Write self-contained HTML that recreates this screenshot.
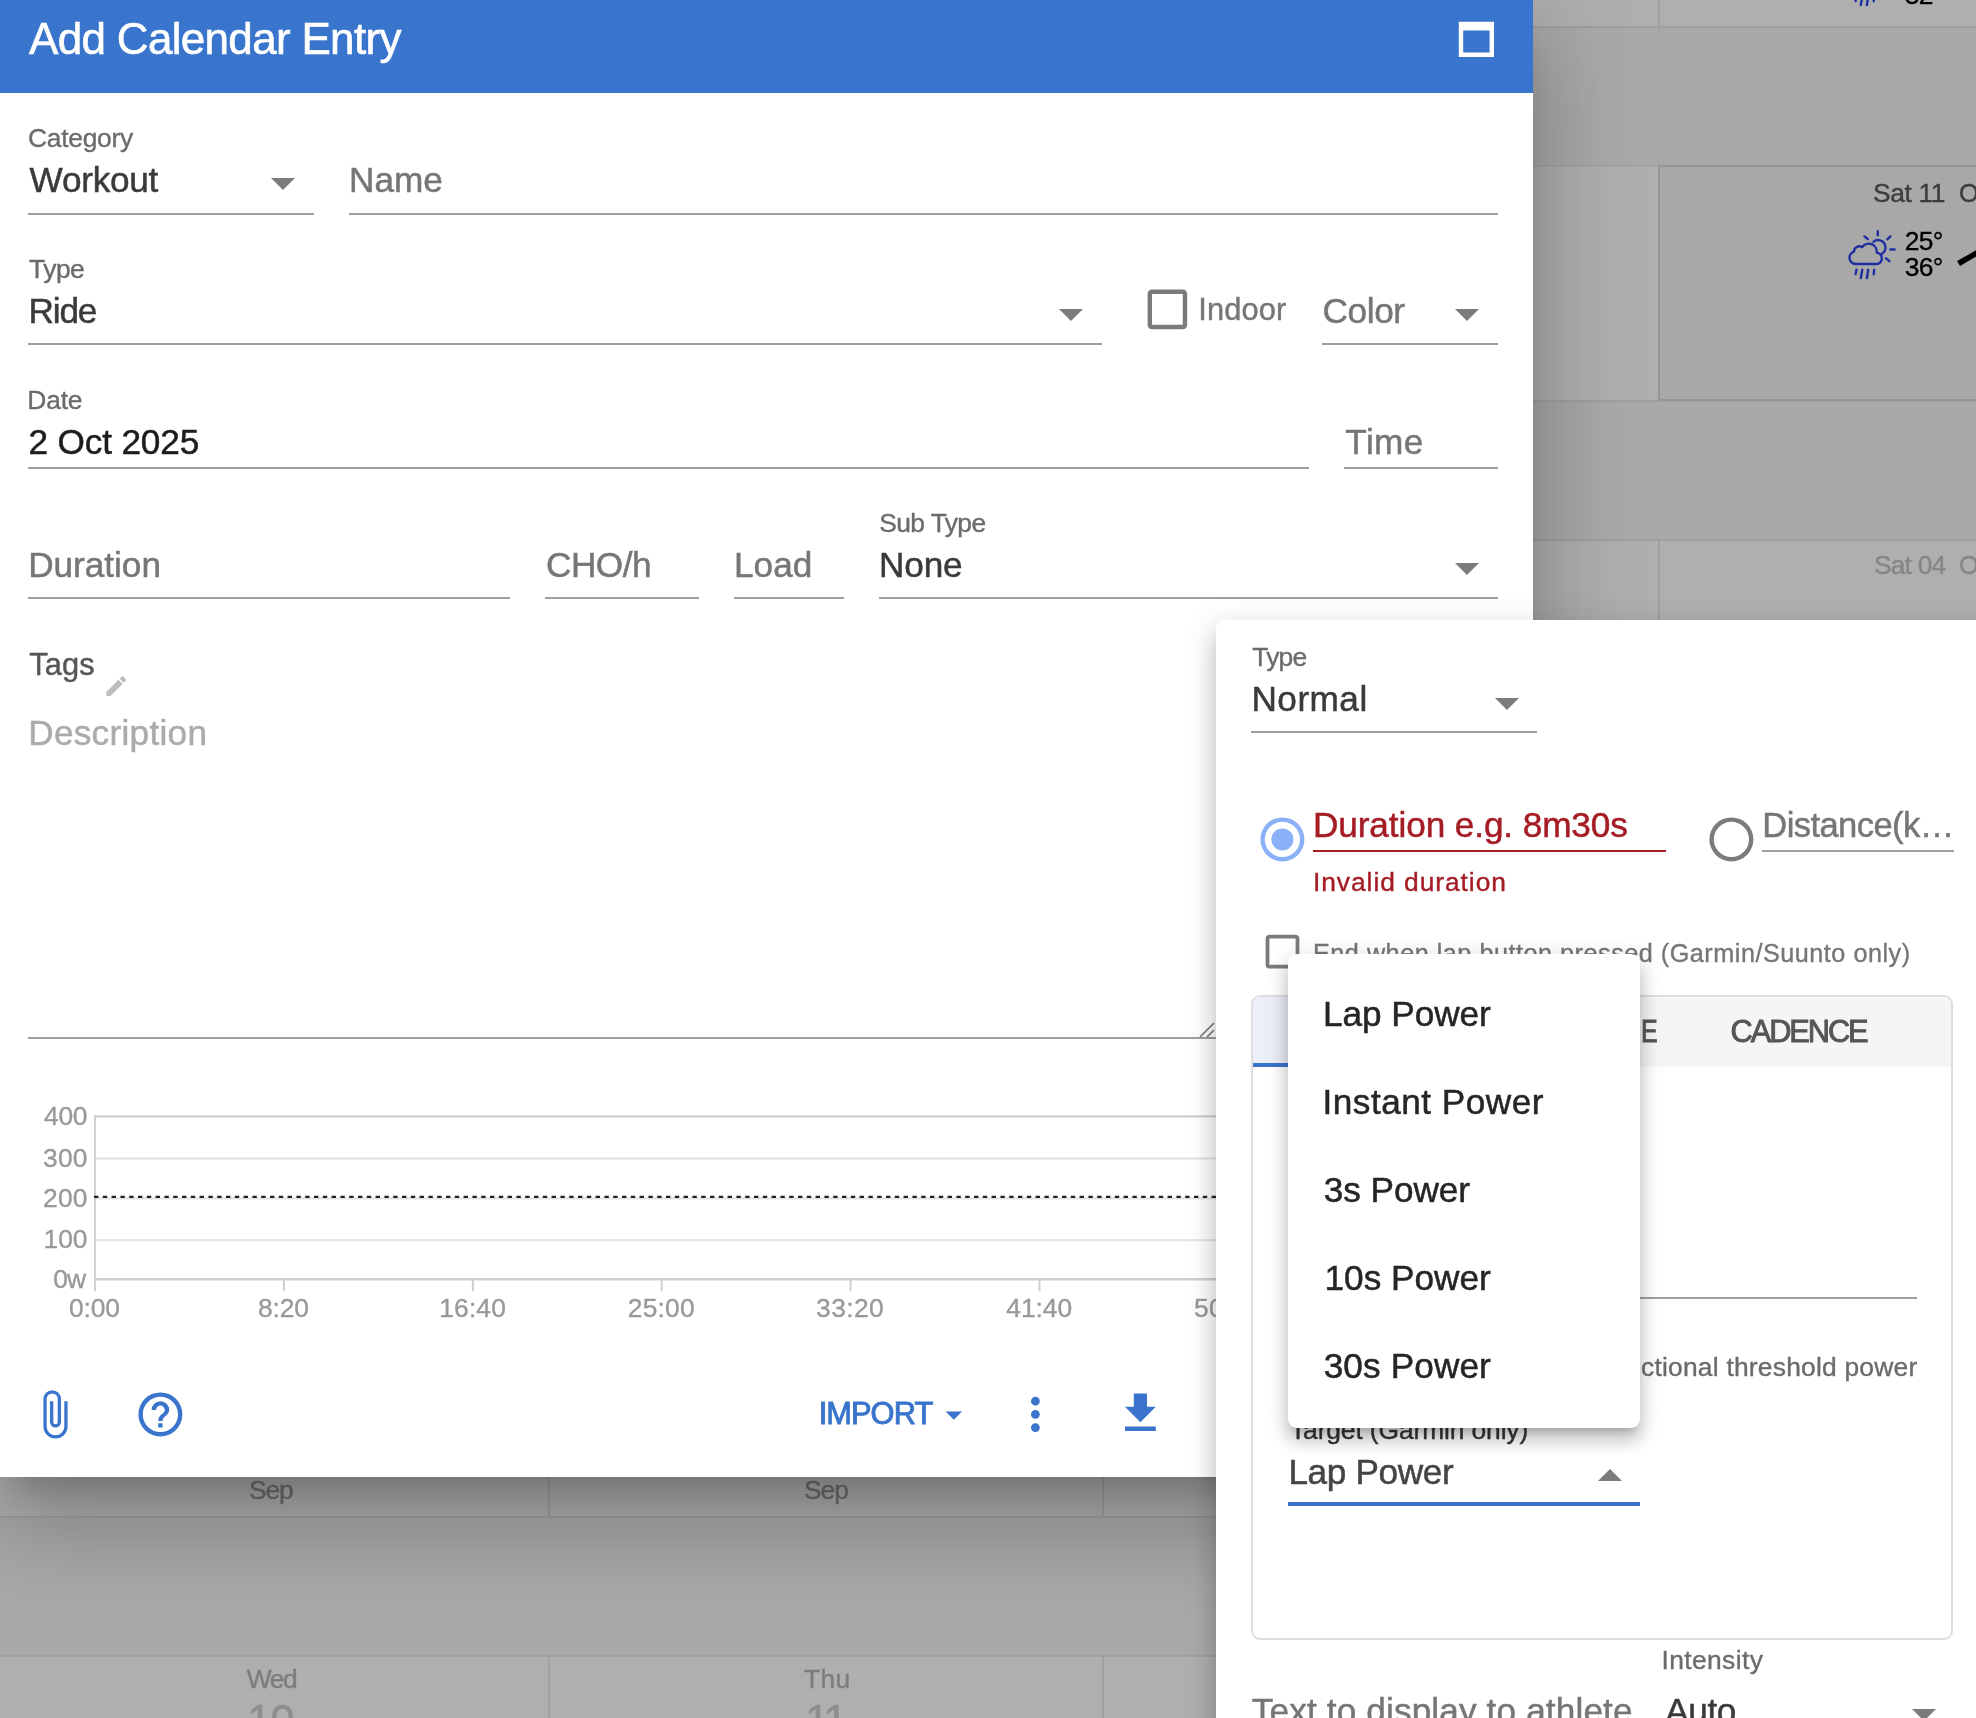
<!DOCTYPE html>
<html><head><meta charset="utf-8"><title>Add Calendar Entry</title>
<style>
html,body{margin:0;padding:0}
body{width:1976px;height:1718px;overflow:hidden;position:relative;background:#a9a9a9;font-family:"Liberation Sans",sans-serif}
.t{position:absolute;white-space:pre;line-height:1;-webkit-text-stroke:0.014em currentColor}
#bg,#dlg,#pan,#menu{position:absolute;left:0;top:0;width:1976px;height:1718px;will-change:transform}
.a{position:absolute}
.ic{position:absolute;width:52.8px;height:52.8px}
.ul{position:absolute;height:2px;background:#9f9f9f}
.ad{position:absolute;width:0;height:0;border-left:12.6px solid transparent;border-right:12.6px solid transparent;border-top:12.8px solid #7b7b7b}
.au{position:absolute;width:0;height:0;border-left:12.6px solid transparent;border-right:12.6px solid transparent;border-bottom:12.8px solid #7b7b7b}
.lt{background:#afafaf}
.ln{background:#a0a0a0}
</style></head><body>
<!-- ============ background calendar (dimmed) ============ -->
<div id="bg">
<div class="a lt" style="left:1533px;top:0;width:443px;height:26px"></div>
<div class="a lt" style="left:1533px;top:166px;width:126px;height:234px"></div>
<div class="a lt" style="left:1533px;top:540px;width:443px;height:90px"></div>
<div class="a lt" style="left:0;top:1470px;width:1230px;height:47px"></div>
<div class="a lt" style="left:0;top:1656px;width:1230px;height:70px"></div>
<div class="a ln" style="left:1533px;top:25.5px;width:443px;height:2px"></div>
<div class="a ln" style="left:1533px;top:164.5px;width:443px;height:2px;opacity:.55"></div>
<div class="a ln" style="left:1533px;top:400px;width:443px;height:2px"></div>
<div class="a ln" style="left:1533px;top:538.5px;width:443px;height:2px"></div>
<div class="a ln" style="left:1657.5px;top:0;width:2px;height:26px"></div>
<div class="a ln" style="left:1657.5px;top:27px;width:2px;height:600px;opacity:.2"></div>
<div class="a ln" style="left:1657.5px;top:540px;width:2px;height:90px"></div>
<div class="a" style="left:1657.5px;top:164.5px;width:340px;height:232px;border:2px solid #959595;background:#a8a8a8"></div>
<div class="a ln" style="left:0;top:1516px;width:1230px;height:2px"></div>
<div class="a ln" style="left:0;top:1654.5px;width:1230px;height:2px"></div>
<div class="a ln" style="left:547.7px;top:1470px;width:2px;height:47px"></div>
<div class="a ln" style="left:1102.3px;top:1470px;width:2px;height:47px"></div>
<div class="a ln" style="left:547.7px;top:1656px;width:2px;height:70px"></div>
<div class="a ln" style="left:1102.3px;top:1656px;width:2px;height:70px"></div>
<!-- weather icon -->
<svg class="a" style="left:1840px;top:225px" width="60" height="60" viewBox="1840 225 60 60"><g fill="none" stroke="#1f2fa3" stroke-width="2.4" stroke-linecap="round" stroke-linejoin="round">
<path d="M1855.5 264 a6.3 6.3 0 0 1 -1.6 -12.3 a5.5 5.5 0 0 1 8.3 -4.6 a8 8 0 0 1 14.5 5.5 a5.8 5.8 0 0 1 0.6 11.4 z"/>
<path d="M1873.4 241.8 A7.4 7.4 0 1 1 1882.3 253.6"/>
<path d="M1877.8 231.2V235.3M1864.5 236.4L1867.7 239M1890.4 236.4L1887.3 239.3M1890.4 249.5H1894.6M1886 258.4L1889.3 261.2"/>
<path d="M1856.5 269.6L1855.6 274M1862.3 269.6L1860.8 278M1868.2 269.6L1866.9 278M1874.2 269.6L1873.7 274.2"/>
</g></svg>
<svg class="a" style="left:1840px;top:0" width="60" height="12" viewBox="1840 273 60 12"><g fill="none" stroke="#1f2fa3" stroke-width="2.4" stroke-linecap="round" stroke-linejoin="round">
<path d="M1855.5 264 a6.3 6.3 0 0 1 -1.6 -12.3 a5.5 5.5 0 0 1 8.3 -4.6 a8 8 0 0 1 14.5 5.5 a5.8 5.8 0 0 1 0.6 11.4 z"/>
<path d="M1873.4 241.8 A7.4 7.4 0 1 1 1882.3 253.6"/>
<path d="M1877.8 231.2V235.3M1864.5 236.4L1867.7 239M1890.4 236.4L1887.3 239.3M1890.4 249.5H1894.6M1886 258.4L1889.3 261.2"/>
<path d="M1856.5 269.6L1855.6 274M1862.3 269.6L1860.8 278M1868.2 269.6L1866.9 278M1874.2 269.6L1873.7 274.2"/>
</g></svg>
<svg class="a" style="left:1950px;top:240px" width="30" height="30" viewBox="1950 240 30 30"><path d="M1957.2 261 L1976.5 250 L1976.5 256.2 L1960 266z" fill="#000"/></svg>
<span class="t" style="left:1872.9px;top:179.5px;font-size:26.4px;color:#3c3c3c;letter-spacing:-0.36px;">Sat 11</span>
<span class="t" style="left:1958.6px;top:179.5px;font-size:26.4px;color:#3c3c3c;transform-origin:0 0;transform:scaleX(0.968);">O</span>
<span class="t" style="left:1904.8px;top:227.7px;font-size:26.4px;color:#000;letter-spacing:-0.75px;">25°</span>
<span class="t" style="left:1904.8px;top:254.4px;font-size:26.4px;color:#000;letter-spacing:-0.75px;">36°</span>
<span class="t" style="left:1904.8px;top:-17.8px;font-size:26.4px;color:#000;letter-spacing:-0.75px;">32°</span>
<span class="t" style="left:1873.9px;top:552.4px;font-size:26.4px;color:#868686;letter-spacing:-0.78px;">Sat 04</span>
<span class="t" style="left:1958.6px;top:552.4px;font-size:26.4px;color:#868686;transform-origin:0 0;transform:scaleX(0.968);">O</span>
<span class="t" style="left:249.0px;top:1477.1px;font-size:26.4px;color:#707070;letter-spacing:-1.10px;">Sep</span>
<span class="t" style="left:804.0px;top:1477.1px;font-size:26.4px;color:#707070;letter-spacing:-1.00px;">Sep</span>
<span class="t" style="left:246.7px;top:1666.2px;font-size:26.4px;color:#7d7d7d;letter-spacing:-1.35px;">Wed</span>
<span class="t" style="left:804.0px;top:1666.2px;font-size:26.4px;color:#7d7d7d;letter-spacing:0.35px;">Thu</span>
<span class="t" style="left:247.0px;top:1699.1px;font-size:44.0px;color:#8e8e8e;letter-spacing:-1.20px;">10</span>
<span class="t" style="left:805.0px;top:1699.1px;font-size:44.0px;color:#8e8e8e;letter-spacing:-3.00px;">11</span>
</div>
<!-- ============ main dialog ============ -->
<div id="dlg">
<div class="a" style="left:0;top:0;width:1533px;height:1477px;background:#fff;box-shadow:0 24px 33px -15px rgba(0,0,0,.2),0 53px 84px 7px rgba(0,0,0,.14),0 20px 101px 18px rgba(0,0,0,.12)"></div>
<div class="a" style="left:0;top:0;width:1533px;height:92.7px;background:#3974cd"></div>
<svg class="ic" style="left:1449.6px;top:12.9px" viewBox="0 0 24 24"><path fill="#fff" d="M4,4H20V20H4V4M6,8V18H18V8H6Z"/></svg>
<!-- underlines -->
<div class="ul" style="left:28px;top:213px;width:285.5px"></div>
<div class="ul" style="left:349px;top:213px;width:1148.5px"></div>
<div class="ul" style="left:28px;top:343px;width:1073.5px"></div>
<div class="ul" style="left:1322px;top:343px;width:175.5px"></div>
<div class="ul" style="left:28px;top:467px;width:1280.5px"></div>
<div class="ul" style="left:1344px;top:467px;width:153.5px"></div>
<div class="ul" style="left:28px;top:597px;width:481.5px"></div>
<div class="ul" style="left:545px;top:597px;width:153.5px"></div>
<div class="ul" style="left:734px;top:597px;width:109.5px"></div>
<div class="ul" style="left:879px;top:597px;width:618.5px"></div>
<div class="ul" style="left:28px;top:1036.5px;width:1190px"></div>
<!-- select arrows -->
<div class="ad" style="left:271.4px;top:177.9px"></div>
<div class="ad" style="left:1058.8px;top:308.9px"></div>
<div class="ad" style="left:1454.8px;top:308.9px"></div>
<div class="ad" style="left:1454.8px;top:563.1px"></div>
<!-- indoor checkbox -->
<svg class="ic" style="left:1141.4px;top:282.9px" viewBox="0 0 24 24"><path fill="#7b7b7b" d="M19,3H5C3.89,3 3,3.89 3,5V19A2,2 0 0,0 5,21H19A2,2 0 0,0 21,19V5C21,3.89 20.1,3 19,3M19,5V19H5V5H19Z"/></svg>
<!-- pencil -->
<svg class="a" style="left:103.4px;top:672.6px;width:26.4px;height:26.4px" viewBox="0 0 24 24"><path fill="#bdbdbd" d="M20.71,7.04C21.1,6.65 21.1,6 20.71,5.63L18.37,3.29C18,2.9 17.35,2.9 16.96,3.29L15.12,5.12L18.87,8.87M3,17.25V21H6.75L17.81,9.93L14.06,6.18L3,17.25Z"/></svg>
<!-- textarea resize handle -->
<svg class="a" style="left:1198px;top:1020px" width="20" height="18" viewBox="0 0 20 18" stroke="#777" stroke-width="1.6" fill="none"><path d="M2 17L16 3M9 17L16 10"/></svg>
<!-- chart -->
<svg class="a" style="left:0;top:1100px" width="1533" height="200" viewBox="0 1100 1533 200" fill="none">
<path d="M95 1116.4H1533M95 1279.2H1533" stroke="#cfcfcf" stroke-width="2.4"/>
<path d="M95 1158.5H1533M95 1198.4H1533M95 1240.3H1533" stroke="#e2e2e2" stroke-width="2"/>
<path d="M95 1115.2V1291.3M283.9 1279V1291.3M472.9 1279V1291.3M661.7 1279V1291.3M850.6 1279V1291.3M1039.5 1279V1291.3" stroke="#cfcfcf" stroke-width="2"/>
<path d="M94 1196.9H1533" stroke="#222" stroke-width="2.2" stroke-dasharray="4.4 4.4"/>
</svg>
<!-- footer icons -->
<svg class="ic" style="left:27.8px;top:1387.8px" viewBox="0 0 24 24"><path fill="#3a74cc" d="M16.5,6V17.5A4,4 0 0,1 12.5,21.5A4,4 0 0,1 8.5,17.5V5A2.5,2.5 0 0,1 11,2.5A2.5,2.5 0 0,1 13.5,5V15.5A1,1 0 0,1 12.5,16.5A1,1 0 0,1 11.5,15.5V6H10V15.5A2.5,2.5 0 0,0 12.5,18A2.5,2.5 0 0,0 15,15.5V5A4,4 0 0,0 11,1A4,4 0 0,0 7,5V17.5A5.5,5.5 0 0,0 12.5,23A5.5,5.5 0 0,0 18,17.5V6H16.5Z"/></svg>
<svg class="ic" style="left:133.6px;top:1387.6px" viewBox="0 0 24 24"><path fill="#3a74cc" d="M11,18H13V16H11V18M12,2A10,10 0 0,0 2,12A10,10 0 0,0 12,22A10,10 0 0,0 22,12A10,10 0 0,0 12,2M12,20C7.59,20 4,16.41 4,12C4,7.59 7.59,4 12,4C16.41,4 20,7.59 20,12C20,16.41 16.41,20 12,20M12,6A4,4 0 0,0 8,10H10A2,2 0 0,1 12,8A2,2 0 0,1 14,10C14,12 11,11.75 11,15H13C13,12.75 16,12.5 16,10A4,4 0 0,0 12,6Z"/></svg>
<svg class="a" style="left:933.9px;top:1394.5px;width:39.6px;height:39.6px" viewBox="0 0 24 24"><path fill="#3a74cc" d="M7,10L12,15L17,10H7Z"/></svg>
<svg class="ic" style="left:1008.6px;top:1387.8px" viewBox="0 0 24 24"><path fill="#3a74cc" d="M12,16A2,2 0 0,1 14,18A2,2 0 0,1 12,20A2,2 0 0,1 10,18A2,2 0 0,1 12,16M12,10A2,2 0 0,1 14,12A2,2 0 0,1 12,14A2,2 0 0,1 10,12A2,2 0 0,1 12,10M12,4A2,2 0 0,1 14,6A2,2 0 0,1 12,8A2,2 0 0,1 10,6A2,2 0 0,1 12,4Z"/></svg>
<svg class="ic" style="left:1114.3px;top:1387.4px" viewBox="0 0 24 24"><path fill="#3a74cc" d="M5,20H19V18H5M19,9H15V3H9V9H5L12,16L19,9Z"/></svg>
<span class="t" style="left:29.0px;top:16.6px;font-size:44.0px;color:#fff;letter-spacing:-0.68px;">Add Calendar Entry</span>
<span class="t" style="left:28.1px;top:124.6px;font-size:26.4px;color:#6b6b6b;letter-spacing:-0.29px;">Category</span>
<span class="t" style="left:29.6px;top:162.1px;font-size:35.2px;color:#3a3a3a;letter-spacing:-0.27px;">Workout</span>
<span class="t" style="left:349.0px;top:161.6px;font-size:35.2px;color:#767676;">Name</span>
<span class="t" style="left:29.1px;top:255.6px;font-size:26.4px;color:#6b6b6b;letter-spacing:-0.53px;">Type</span>
<span class="t" style="left:28.6px;top:293.1px;font-size:35.2px;color:#3a3a3a;letter-spacing:-1.20px;">Ride</span>
<span class="t" style="left:1198.2px;top:294.5px;font-size:30.8px;color:#767676;letter-spacing:0.16px;">Indoor</span>
<span class="t" style="left:1322.5px;top:292.7px;font-size:35.2px;color:#767676;letter-spacing:-0.38px;">Color</span>
<span class="t" style="left:27.3px;top:386.5px;font-size:26.4px;color:#6b6b6b;letter-spacing:-0.20px;">Date</span>
<span class="t" style="left:28.6px;top:423.9px;font-size:35.2px;color:#1c1c1c;letter-spacing:-0.17px;">2 Oct 2025</span>
<span class="t" style="left:1345.3px;top:423.6px;font-size:35.2px;color:#767676;letter-spacing:0.40px;">Time</span>
<span class="t" style="left:879.3px;top:509.6px;font-size:26.4px;color:#6b6b6b;letter-spacing:-0.61px;">Sub Type</span>
<span class="t" style="left:28.2px;top:546.9px;font-size:35.2px;color:#767676;letter-spacing:-0.03px;">Duration</span>
<span class="t" style="left:546.0px;top:546.8px;font-size:35.2px;color:#767676;letter-spacing:-0.50px;">CHO/h</span>
<span class="t" style="left:734.0px;top:546.8px;font-size:35.2px;color:#767676;">Load</span>
<span class="t" style="left:879.0px;top:546.8px;font-size:35.2px;color:#3a3a3a;letter-spacing:-0.17px;">None</span>
<span class="t" style="left:29.3px;top:649.7px;font-size:30.8px;color:#555;letter-spacing:0.07px;">Tags</span>
<span class="t" style="left:28.2px;top:715.0px;font-size:35.2px;color:#ababab;letter-spacing:0.28px;">Description</span>
<span class="t" style="left:44.0px;top:1102.9px;font-size:26.4px;color:#999999;letter-spacing:-0.30px;">400</span>
<span class="t" style="left:43.0px;top:1145.0px;font-size:26.4px;color:#999999;letter-spacing:0.20px;">300</span>
<span class="t" style="left:43.0px;top:1184.6px;font-size:26.4px;color:#999999;letter-spacing:0.20px;">200</span>
<span class="t" style="left:43.5px;top:1225.5px;font-size:26.4px;color:#999999;letter-spacing:-0.05px;">100</span>
<span class="t" style="left:53.3px;top:1265.5px;font-size:26.4px;color:#999999;letter-spacing:-0.90px;">0w</span>
<span class="t" style="left:68.9px;top:1295.1px;font-size:26.4px;color:#999999;letter-spacing:-0.10px;">0:00</span>
<span class="t" style="left:257.9px;top:1295.1px;font-size:26.4px;color:#999999;letter-spacing:-0.10px;">8:20</span>
<span class="t" style="left:439.3px;top:1295.1px;font-size:26.4px;color:#999999;letter-spacing:0.12px;">16:40</span>
<span class="t" style="left:627.8px;top:1295.1px;font-size:26.4px;color:#999999;letter-spacing:0.20px;">25:00</span>
<span class="t" style="left:816.1px;top:1295.1px;font-size:26.4px;color:#999999;letter-spacing:0.40px;">33:20</span>
<span class="t" style="left:1006.3px;top:1295.1px;font-size:26.4px;color:#999999;letter-spacing:-0.05px;">41:40</span>
<span class="t" style="left:1194.1px;top:1295.1px;font-size:26.4px;color:#999999;letter-spacing:0.23px;">50:00</span>
<span class="t" style="left:818.7px;top:1399.4px;font-size:30.8px;color:#3a74cc;letter-spacing:-0.94px;-webkit-text-stroke-width:0.03em;">IMPORT</span>
</div>
<!-- ============ step editor panel ============ -->
<div id="pan">
<div class="a" style="left:1216px;top:620px;width:800px;height:1200px;background:#fff;border-top-left-radius:9px;box-shadow:0 11px 11px -7px rgba(0,0,0,.2),0 18px 22px 2px rgba(0,0,0,.14),0 7px 31px 4px rgba(0,0,0,.12)"></div>
<div class="ul" style="left:1251px;top:731px;width:285.5px"></div>
<div class="ad" style="left:1495.3px;top:697.6px"></div>
<!-- radios -->
<svg class="ic" style="left:1255.6px;top:812.6px" viewBox="0 0 24 24"><path fill="#8ab0f8" d="M12,20A8,8 0 0,1 4,12A8,8 0 0,1 12,4A8,8 0 0,1 20,12A8,8 0 0,1 12,20M12,2A10,10 0 0,0 2,12A10,10 0 0,0 12,22A10,10 0 0,0 22,12A10,10 0 0,0 12,2M12,7A5,5 0 0,0 7,12A5,5 0 0,0 12,17A5,5 0 0,0 17,12A5,5 0 0,0 12,7Z"/></svg>
<svg class="ic" style="left:1705.2px;top:812.9px" viewBox="0 0 24 24"><path fill="#7b7b7b" d="M12,20A8,8 0 0,1 4,12A8,8 0 0,1 12,4A8,8 0 0,1 20,12A8,8 0 0,1 12,20M12,2A10,10 0 0,0 2,12A10,10 0 0,0 12,22A10,10 0 0,0 22,12A10,10 0 0,0 12,2Z"/></svg>
<div class="ul" style="left:1313px;top:849.8px;width:353px;background:#a51c25"></div>
<div class="ul" style="left:1762px;top:849.8px;width:191.7px"></div>
<!-- lap checkbox -->
<svg class="a" style="left:1259.5px;top:929.4px;width:45px;height:45px" viewBox="0 0 24 24"><path fill="#7b7b7b" d="M19,3H5C3.89,3 3,3.89 3,5V19A2,2 0 0,0 5,21H19A2,2 0 0,0 21,19V5C21,3.89 20.1,3 19,3M19,5V19H5V5H19Z"/></svg>
<!-- tabs card -->
<div class="a" style="left:1251px;top:995px;width:698.2px;height:640.5px;border:2px solid #dedede;border-radius:9px;overflow:hidden;background:#fff">
  <div class="a" style="left:0;top:0;width:700px;height:69.5px;background:#f5f5f5"></div>
  <div class="a" style="left:0;top:0;width:190px;height:69.5px;background:#eceef8"></div>
  <div class="a" style="left:0;top:65.6px;width:190px;height:4.4px;background:#3a74cc"></div>
</div>
<div class="ul" style="left:1289px;top:1297.4px;width:628px"></div>
<div class="a" style="left:1288px;top:1501.6px;width:352px;height:4.4px;background:#3a74cc"></div>
<div class="au" style="left:1597.7px;top:1469.0px"></div>
<div class="ad" style="left:1911.6px;top:1708.8px"></div>
<span class="t" style="left:1252.3px;top:644.3px;font-size:26.4px;color:#6b6b6b;letter-spacing:-0.77px;">Type</span>
<span class="t" style="left:1251.5px;top:681.4px;font-size:35.2px;color:#3a3a3a;letter-spacing:0.46px;">Normal</span>
<span class="t" style="left:1313.0px;top:806.8px;font-size:35.2px;color:#a51c25;letter-spacing:-0.11px;">Duration e.g. 8m30s</span>
<span class="t" style="left:1313.0px;top:868.6px;font-size:26.4px;color:#a51c25;letter-spacing:0.93px;">Invalid duration</span>
<span class="t" style="left:1762.3px;top:807.5px;font-size:34.6px;color:#767676;letter-spacing:-0.60px;">Distance(k…</span>
<span class="t" style="left:1313.0px;top:940.8px;font-size:25.2px;color:#767676;letter-spacing:0.52px;">End when lap button pressed (Garmin/Suunto only)</span>
<span class="t" style="left:1730.6px;top:1017.2px;font-size:30.8px;color:#555;letter-spacing:-2.10px;-webkit-text-stroke-width:0.03em;">CADENCE</span>
<span class="t" style="left:1640.6px;top:1017.1px;font-size:30.8px;color:#555;-webkit-text-stroke-width:0.03em;transform-origin:0 0;transform:scaleX(0.811);">E</span>
<span class="t" style="left:1641.0px;top:1353.6px;font-size:26.4px;color:#6b6b6b;letter-spacing:0.22px;">ctional threshold power</span>
<span class="t" style="left:1290.0px;top:1416.6px;font-size:26.4px;color:#333;letter-spacing:-0.12px;">Target (Garmin only)</span>
<span class="t" style="left:1288.4px;top:1453.6px;font-size:35.2px;color:#444;letter-spacing:-0.36px;">Lap Power</span>
<span class="t" style="left:1661.5px;top:1647.1px;font-size:26.4px;color:#6b6b6b;letter-spacing:0.38px;">Intensity</span>
<span class="t" style="left:1251.8px;top:1692.9px;font-size:35.2px;color:#767676;letter-spacing:0.13px;">Text to display to athlete</span>
<span class="t" style="left:1665.2px;top:1692.9px;font-size:35.2px;color:#3a3a3a;letter-spacing:-0.40px;">Auto</span>
</div>
<!-- ============ dropdown menu ============ -->
<div id="menu">
<div class="a" style="left:1288px;top:953.5px;width:352px;height:474px;background:#fff;border-radius:9px;box-shadow:0 8px 8px -5px rgba(0,0,0,.2),0 13px 16px 1.5px rgba(0,0,0,.14),0 5px 23px 3px rgba(0,0,0,.12)"></div>
<span class="t" style="left:1323.1px;top:995.6px;font-size:35.2px;color:#252525;letter-spacing:-0.06px;">Lap Power</span>
<span class="t" style="left:1322.5px;top:1083.8px;font-size:35.2px;color:#252525;letter-spacing:0.48px;">Instant Power</span>
<span class="t" style="left:1323.7px;top:1171.9px;font-size:35.2px;color:#252525;letter-spacing:-0.04px;">3s Power</span>
<span class="t" style="left:1324.5px;top:1259.9px;font-size:35.2px;color:#252525;letter-spacing:0.01px;">10s Power</span>
<span class="t" style="left:1323.7px;top:1347.9px;font-size:35.2px;color:#252525;letter-spacing:0.11px;">30s Power</span>
</div>
</body></html>
